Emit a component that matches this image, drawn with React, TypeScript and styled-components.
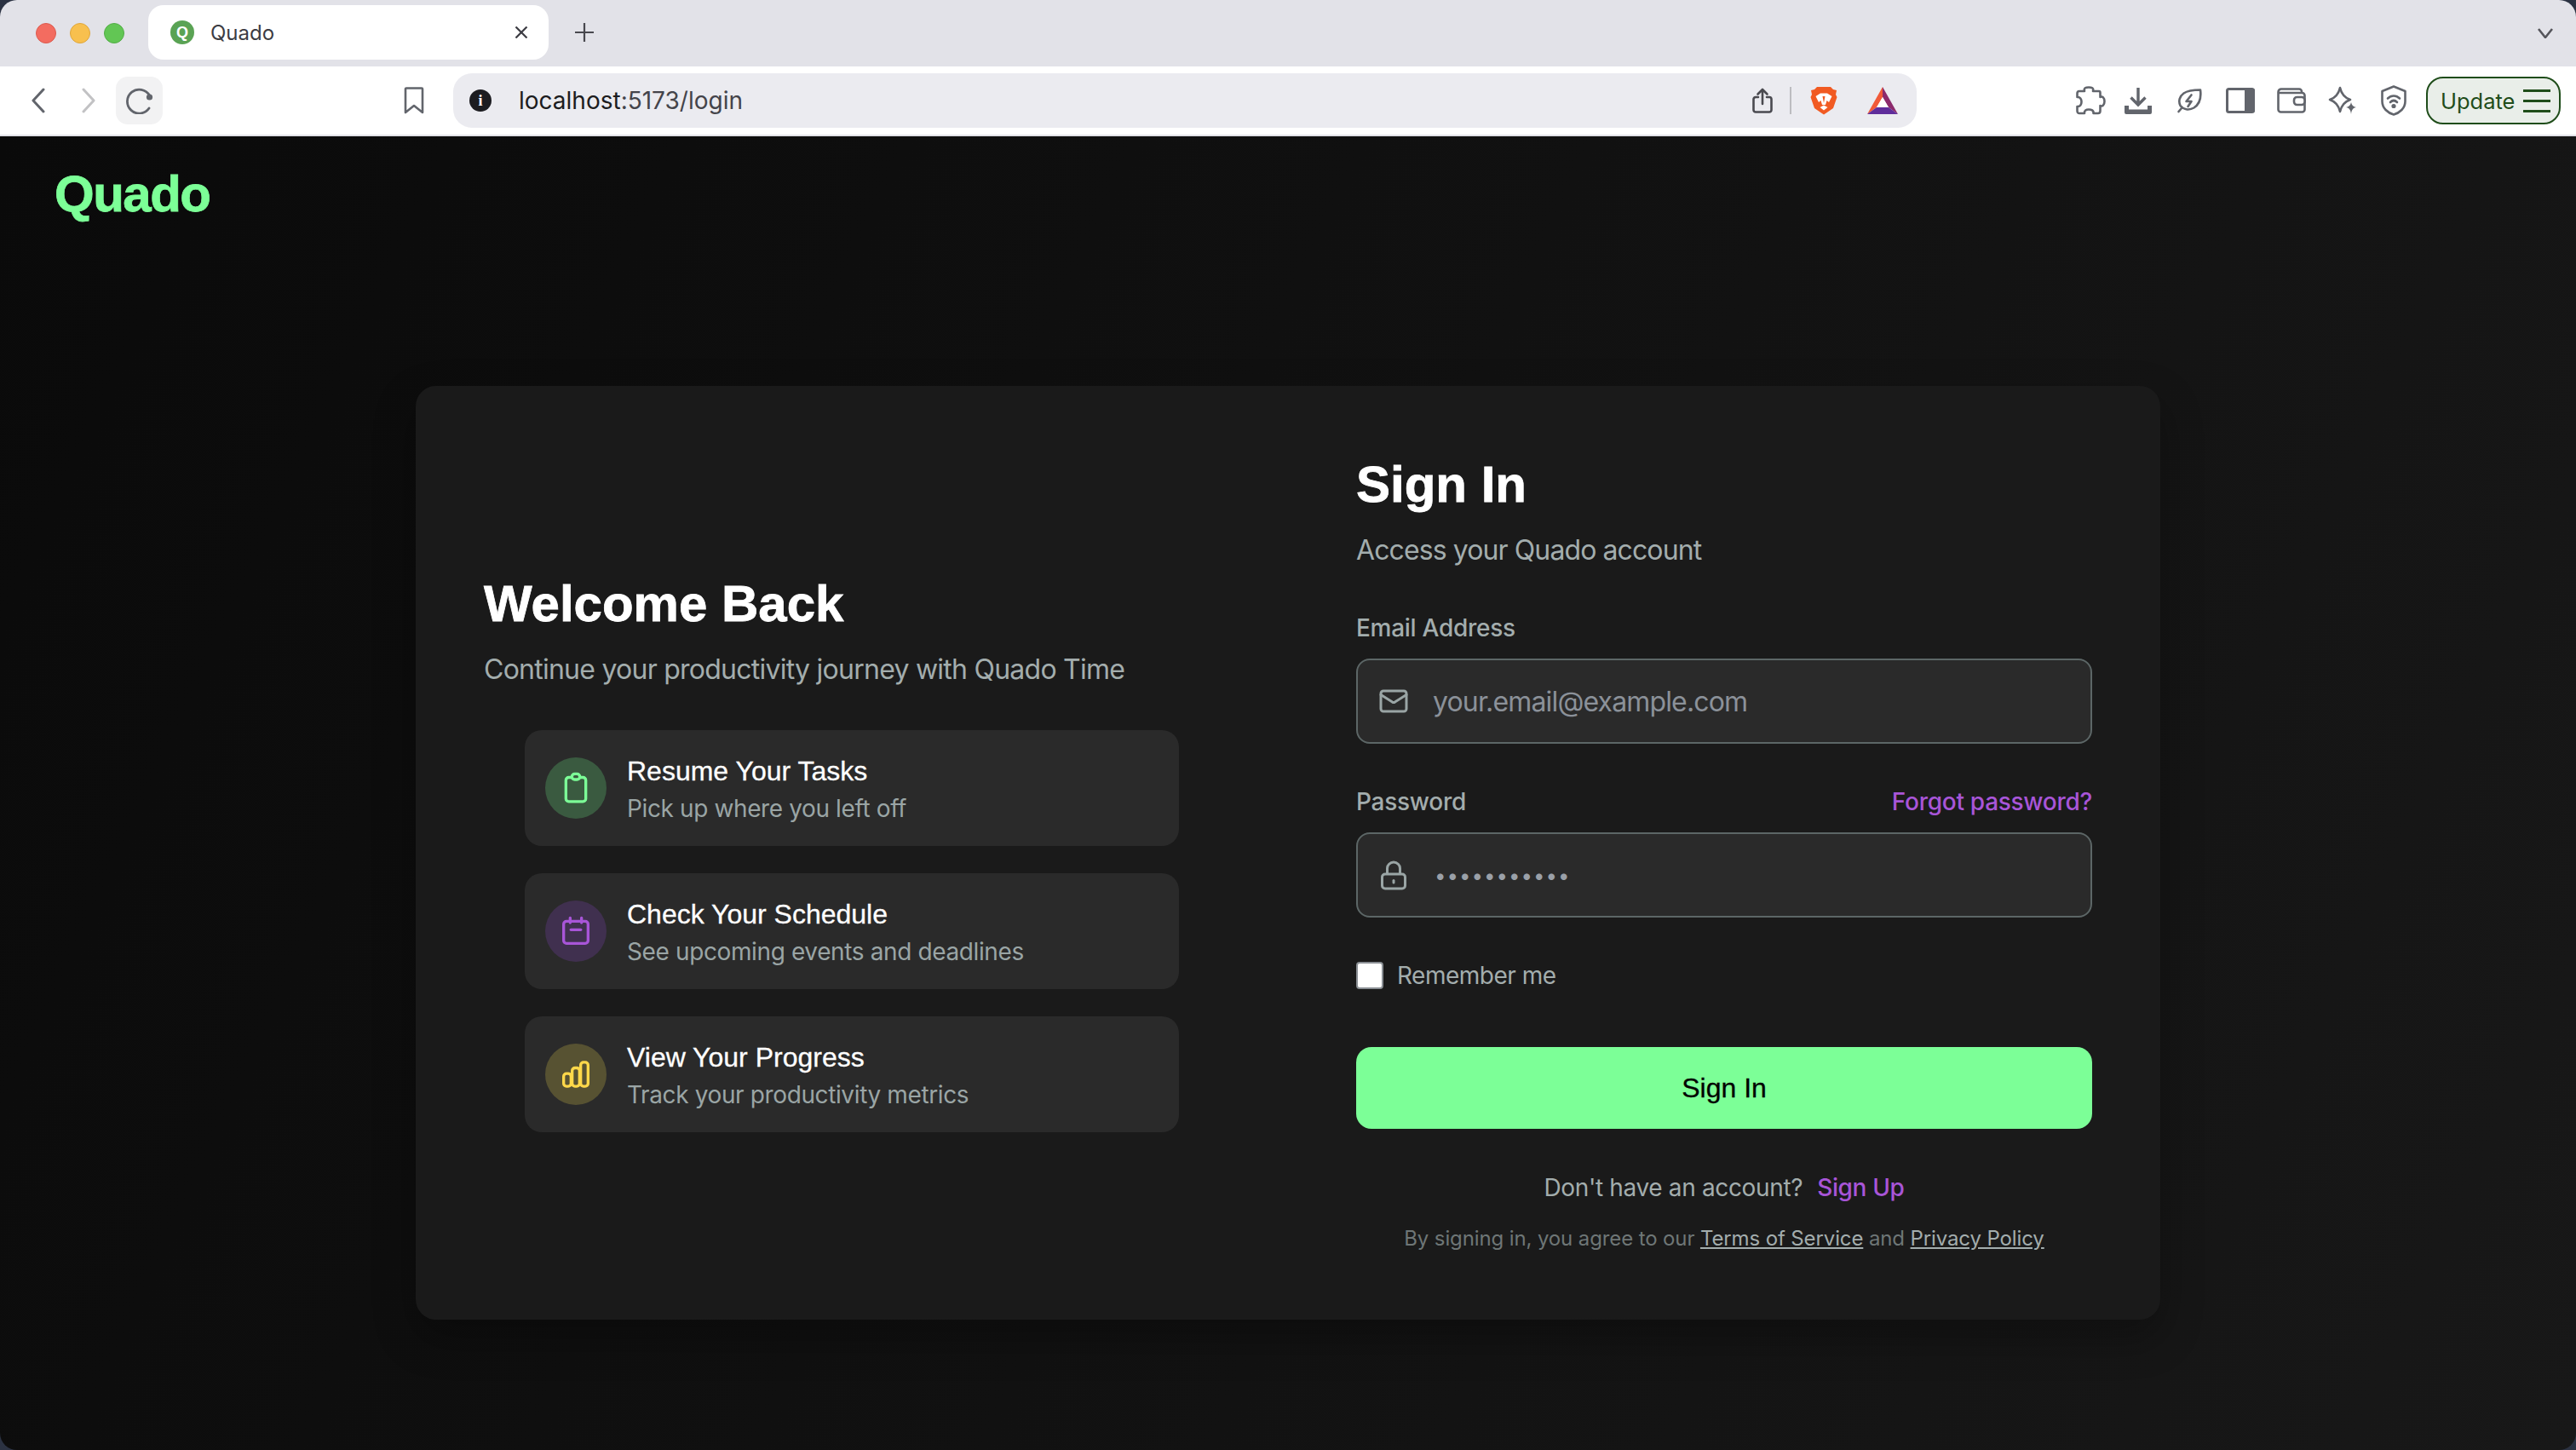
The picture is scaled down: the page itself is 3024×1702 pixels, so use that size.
import React from 'react';
import styled, { createGlobalStyle } from 'styled-components';
import { Mail } from 'lucide-react';

const GlobalStyle = createGlobalStyle`
  html, body {
    margin: 0;
    padding: 0;
    background: #2b3242;
  }
  * {
    box-sizing: border-box;
  }
`;

const Window = styled.div`
  width: 3024px;
  height: 1702px;
  display: flex;
  flex-direction: column;
  border-radius: 20px;
  overflow: hidden;
  font-family: Inter, "Noto Sans", sans-serif;
`;

/* browser chrome */
const TabStrip = styled.div`
  height: 78px;
  flex: none;
  display: flex;
  align-items: center;
  padding: 0 27px 0 42px;
  background: #e2e2e8;
`;

const Lights = styled.div`
  display: flex;
  gap: 16px;
`;

const Light = styled.span<{ $color: string; $edge: string }>`
  width: 24px;
  height: 24px;
  border-radius: 50%;
  background: ${(p) => p.$color};
  border: 1px solid ${(p) => p.$edge};
`;

const Tab = styled.div`
  width: 470px;
  height: 64px;
  margin-left: 28px;
  align-self: flex-end;
  margin-bottom: 8px;
  display: flex;
  align-items: center;
  padding: 0 24px 0 26px;
  border-radius: 18px;
  background: #ffffff;
  color: #3c3c43;
  font-size: 24px;
`;

const Favicon = styled.span`
  width: 28px;
  height: 28px;
  flex: none;
  display: flex;
  align-items: center;
  justify-content: center;
  border-radius: 50%;
  background: #5aa354;
  color: #ffffff;
  font: bold 18px "Liberation Sans", sans-serif;
`;

const TabTitle = styled.span`
  margin-left: 19px;
  flex: 1;
`;

const NewTab = styled.span`
  display: flex;
  margin-left: 31px;
  margin-bottom: 2px;
`;

const TabMenu = styled.span`
  display: flex;
  margin-left: auto;
`;

const Toolbar = styled.div`
  height: 82px;
  flex: none;
  display: grid;
  grid-template-columns: 532px 1718px 1fr;
  align-items: start;
  padding-top: 8px;
  background: #ffffff;
  border-bottom: 2px solid #e2e2e8;
`;

const NavGroup = styled.div`
  height: 64px;
  display: flex;
  align-items: center;
  padding: 0 34px 0 27px;
`;

const NavSlot = styled.span<{ $gap?: number }>`
  width: 36px;
  display: flex;
  justify-content: center;
  margin-left: ${(p) => p.$gap ?? 0}px;
`;

const ReloadButton = styled.span`
  width: 55px;
  height: 56px;
  margin-left: 14px;
  display: flex;
  align-items: center;
  justify-content: center;
  border-radius: 14px;
  background: #f2f2f3;
`;

const BookmarkSlot = styled.span`
  margin-left: auto;
  display: flex;
  width: 24px;
`;

const UrlBar = styled.div`
  height: 64px;
  display: flex;
  align-items: center;
  padding: 0 22px 0 19px;
  border-radius: 22px;
  background: #ebebf0;
`;

const InfoDot = styled.span`
  width: 26px;
  height: 26px;
  flex: none;
  display: flex;
  align-items: center;
  justify-content: center;
  border-radius: 50%;
  background: #1c1c20;
  color: #ffffff;
  font: bold 18px "Liberation Serif", serif;
`;

const UrlText = styled.span`
  margin-left: 32px;
  font-size: 28px;
  color: #1c1c20;
`;

const UrlMuted = styled.span`
  color: #44444a;
`;

const UrlActions = styled.div`
  margin-left: auto;
  display: flex;
  align-items: center;
`;

const UrlDivider = styled.span`
  width: 2px;
  height: 32px;
  margin: 0 22px 0 20px;
  background: #bcbcc0;
`;

const BatSlot = styled.span`
  display: flex;
  margin-left: 35px;
`;

const ToolGroup = styled.div`
  height: 64px;
  display: flex;
  align-items: center;
  justify-content: flex-end;
  padding-right: 18px;
`;

const ToolSlot = styled.span<{ $nudge?: number }>`
  width: 60px;
  display: flex;
  justify-content: center;
  padding-left: ${(p) => p.$nudge ?? 0}px;
  color: #62656c;
`;

const UpdateButton = styled.div`
  width: 158px;
  height: 56px;
  margin-left: 8px;
  display: flex;
  align-items: center;
  justify-content: space-between;
  padding: 0 10px 0 15px;
  border: 2px solid #1f4d1a;
  border-radius: 20px;
  background: #e9eee9;
  color: #1f4d1a;
  font-size: 25.5px;
`;

const BurgerLines = styled.span`
  width: 32px;
  display: flex;
  flex-direction: column;
  gap: 9px;
`;

const BurgerLine = styled.span`
  height: 3px;
  background: #1f4d1a;
`;

/* page */
const Page = styled.div`
  flex: 1;
  display: flex;
  flex-direction: column;
  background: linear-gradient(115deg, #0a0a0a 0%, #181818 100%);
`;

const Header = styled.header`
  height: 140px;
  flex: none;
  padding: 32px 0 0 64px;
`;

const Logo = styled.div`
  font: bold 60px/72px "Liberation Sans", Arial, sans-serif;
  letter-spacing: -1.5px;
  color: #7cff97;
  -webkit-text-stroke: 0.8px #7cff97;
`;

const Main = styled.main`
  flex: 1;
  display: flex;
  align-items: center;
  justify-content: center;
`;

const Card = styled.div`
  width: 2048px;
  height: 1096px;
  display: grid;
  grid-template-columns: 1fr 1fr;
  border-radius: 24px;
  background: #1a1a1a;
  box-shadow: 0 20px 50px rgba(0, 0, 0, 0.3);
`;

const WelcomePanel = styled.section`
  display: flex;
  flex-direction: column;
  justify-content: center;
  padding: 80px;
`;

const Heading = styled.h1`
  margin: 0;
  font: bold 60px/72px "Liberation Sans", Arial, sans-serif;
  color: #ffffff;
  -webkit-text-stroke: 0.8px #ffffff;
`;

const Lead = styled.p`
  margin: 17px 0 0;
  font-size: 32px;
  line-height: 48px;
  letter-spacing: -0.75px;
  color: #a3adad;
`;

const FeatureList = styled.div`
  margin-top: 47px;
  padding: 0 48px;
  display: flex;
  flex-direction: column;
  gap: 32px;
`;

const Feature = styled.div`
  height: 136px;
  display: flex;
  align-items: center;
  gap: 24px;
  padding: 0 24px;
  border-radius: 20px;
  background: #2a2a2a;
`;

const FeatureIcon = styled.span<{ $bg: string; $color: string }>`
  width: 72px;
  height: 72px;
  flex: none;
  display: flex;
  align-items: center;
  justify-content: center;
  border-radius: 50%;
  background: ${(p) => p.$bg};
  color: ${(p) => p.$color};
`;

const FeatureText = styled.div`
  margin-top: 3px;
  display: flex;
  flex-direction: column;
  gap: 4px;
`;

const FeatureTitle = styled.div`
  font: 32px/40px "Liberation Sans", Arial, sans-serif;
  color: #ffffff;
  -webkit-text-stroke: 0.3px #ffffff;
`;

const FeatureSub = styled.div`
  font-size: 28px;
  line-height: 40px;
  letter-spacing: -0.38px;
  color: #9aa5a5;
`;

const FormPanel = styled.section`
  display: flex;
  flex-direction: column;
  padding: 80px 80px 0;
`;

const FormSub = styled(Lead)`
  margin-bottom: 47px;
  letter-spacing: -0.9px;
`;

const LabelRow = styled.div`
  display: flex;
  justify-content: space-between;
  margin-bottom: 16px;
  font-size: 28px;
  line-height: 40px;
  font-weight: 500;
  letter-spacing: -0.28px;
`;

const FieldLabel = styled.label`
  color: #a3adad;
`;

const ForgotLink = styled.a`
  color: #a855d8;
`;

const InputBox = styled.div`
  height: 100px;
  margin-bottom: 48px;
  display: flex;
  align-items: center;
  gap: 28px;
  padding: 0 24px;
  border: 2px solid #5c6666;
  border-radius: 16px;
  background: #2a2a2a;
  color: #9aa5a5;
`;

const TextInput = styled.input`
  flex: 1;
  min-width: 0;
  padding: 0;
  border: none;
  outline: none;
  background: transparent;
  font: 32px Inter, sans-serif;
  letter-spacing: -0.85px;
  color: #9aa5a5;

  &::placeholder {
    color: #8b9199;
    opacity: 1;
  }
`;

const PasswordInput = styled(TextInput)`
  margin-left: 2px;
  font-size: 24px;
  letter-spacing: 1px;
  color: #9aa0a8;
`;

const RememberRow = styled.label`
  height: 40px;
  display: flex;
  align-items: center;
  gap: 16px;
  font-size: 28px;
  letter-spacing: -0.5px;
  color: #a3adad;
`;

const CheckBox = styled.span`
  width: 32px;
  height: 32px;
  border: 2px solid #8a8f94;
  border-radius: 4px;
  background: #ffffff;
`;

const SubmitButton = styled.button`
  height: 96px;
  margin-top: 64px;
  border: none;
  border-radius: 18px;
  background: #7cff97;
  color: #000000;
  font: 32px "Liberation Sans", Arial, sans-serif;
  -webkit-text-stroke: 0.3px #000000;
`;

const SignUpLine = styled.div`
  margin-top: 49px;
  text-align: center;
  font-size: 28px;
  line-height: 40px;
  letter-spacing: -0.35px;
  color: #a3adad;
`;

const SignUpLink = styled.a`
  margin-left: 17px;
  font-weight: 500;
  color: #a855d8;
`;

const Terms = styled.div`
  margin-top: 24px;
  text-align: center;
  font-size: 24px;
  line-height: 32px;
  letter-spacing: -0.12px;
  color: #6e7676;
`;

const TermsLink = styled.a`
  color: #a3adad;
  text-decoration: underline;
`;

/* drawn icons */
const ClipboardIcon = () => (
  <svg width="40" height="40" viewBox="0 0 24 24" fill="none" stroke="currentColor" strokeWidth="2">
    <rect x="5" y="4.5" width="14" height="17" rx="2" />
    <rect x="9.2" y="2" width="5.6" height="4" rx="2" fill="#3a5a40" />
  </svg>
);

const CalendarIcon = () => (
  <svg width="40" height="40" viewBox="0 0 24 24" fill="none" stroke="currentColor" strokeWidth="2" strokeLinecap="round">
    <rect x="3.4" y="5" width="17.2" height="15.6" rx="2" />
    <path d="M8 2.6V6M16 2.6V6M8.5 11h7" />
  </svg>
);

const BarsIcon = () => (
  <svg width="40" height="40" viewBox="0 0 24 24" fill="none" stroke="currentColor" strokeWidth="2" strokeLinejoin="round">
    <rect x="3.4" y="11.5" width="5.2" height="9" rx="2" />
    <rect x="9.4" y="7.5" width="5.2" height="13" rx="2" />
    <rect x="15.4" y="3.5" width="5.2" height="17" rx="2" />
  </svg>
);

const LockIcon = () => (
  <svg width="36" height="36" viewBox="0 0 36 36" fill="none" stroke="currentColor" strokeWidth="3">
    <rect x="4.5" y="17" width="27" height="17" rx="3.5" />
    <path d="M10.5 17v-6.5a7.5 7.5 0 0 1 15 0V17" />
    <path d="M18 24.5v2.5" strokeLinecap="round" />
  </svg>
);

const CloseIcon = () => (
  <svg width="16" height="14" viewBox="0 0 16 14" fill="none" stroke="#3c3c43" strokeWidth="2.2">
    <path d="M1.5 .5l13 13M14.5 .5l-13 13" />
  </svg>
);

const PlusIcon = () => (
  <svg width="22" height="22" viewBox="0 0 22 22" fill="none" stroke="#48484e" strokeWidth="2.2">
    <path d="M11 0v22M0 11h22" />
  </svg>
);

const ChevronDown = () => (
  <svg width="18" height="12" viewBox="0 0 18 12" fill="none" stroke="#55555b" strokeWidth="2.6">
    <path d="M1 1l8 10 8-10" />
  </svg>
);

const ChevronSide = ({ color, flip }: { color: string; flip?: boolean }) => (
  <svg width="16" height="30" viewBox="0 0 16 30" fill="none" stroke={color} strokeWidth="3" strokeLinecap="round" strokeLinejoin="round">
    <path d={flip ? 'M2 2l12 13L2 28' : 'M14 2L2 15l12 13'} />
  </svg>
);

const ReloadIcon = () => (
  <svg width="32" height="32" viewBox="0 0 32 32" fill="none" stroke="#62656c" strokeWidth="2.8">
    <path d="M27.5 10A14 14 0 1 0 27 25" strokeLinecap="round" />
    <circle cx="27.5" cy="12" r="3.6" fill="#62656c" stroke="none" />
  </svg>
);

const BookmarkIcon = () => (
  <svg width="24" height="32" viewBox="0 0 24 32" fill="none" stroke="#62656c" strokeWidth="2.6" strokeLinejoin="round">
    <path d="M2 2.500a1 1 0 0 1 1-1h18a1 1 0 0 1 1 1V30l-10-8-10 8z" />
  </svg>
);

const ShareIcon = () => (
  <svg width="24" height="30" viewBox="0 0 24 30" fill="none" stroke="#4a4a50" strokeWidth="2.6" strokeLinecap="round" strokeLinejoin="round">
    <path d="M7 11H4a2.500 2.500 0 0 0-2.500 2.500V26A2.500 2.500 0 0 0 4 28.500h16a2.500 2.500 0 0 0 2.500-2.500V13.500A2.500 2.500 0 0 0 20 11h-3" />
    <path d="M12 19V2M6.500 7.500L12 2l5.500 5.500" />
  </svg>
);

const BraveIcon = () => (
  <svg width="32" height="34" viewBox="0 0 32 34">
    <path fill="#f15a22" d="M8 1h16l3 3 4 1-1 5 1.500 3L27 26l-8 5.500-3 2-3-2L5 26 .5 13 2 10 1 5l4-1z" />
    <path fill="#ffffff" d="M6.500 12L12 8.500h8l5.500 3.500-3.500 7-2.500-2-1.500 5h-4l-1.500-5L10 19z" />
    <path fill="#ffffff" d="M11.500 25l4.500-2.500 4.500 2.500-4.500 3.500z" />
    <path fill="#f15a22" d="M14.500 12h3L16 20z" />
  </svg>
);

const BatIcon = () => (
  <svg width="36" height="32" viewBox="0 0 36 32">
    <path fill="#f15a38" d="M18 0v12l-7 12-11 8z" />
    <path fill="#8c2a6c" d="M18 0l18 32-11-8-7-12z" />
    <path fill="#5f2d9b" d="M0 32l11-8h14l11 8z" />
    <path fill="#ffffff" d="M18 12l7 12H11z" />
  </svg>
);

const PuzzleIcon = () => (
  <svg width="35" height="34" viewBox="0 0 35 34" fill="none" stroke="currentColor" strokeWidth="2.6" strokeLinejoin="round">
    <path d="M10 6C9 2 11.500 1.500 15 1.500S21 2 20 6h7q1.500 0 1.500 2v5c2.500-1.500 5 1 5 5s-2.500 6.500-5 5v6q0 3-2.500 3h-5.500c.5-3.500-2.500-4.500-5.500-4.500S9.500 28.500 10 32H4q-2.500 0-2.500-3v-5c3.500.5 5-2.500 5-5.500s-1.500-6-5-5.500V8.500Q1.500 6 4 6z" />
  </svg>
);

const DownloadIcon = () => (
  <svg width="32" height="32" viewBox="0 0 32 32" fill="none" stroke="currentColor">
    <path d="M16 1v19M7.500 12.500L16 21l8.500-8.500" strokeWidth="3.400" />
    <path d="M0 22h5v4.500h22V22h5v8a2 2 0 0 1-2 2H2a2 2 0 0 1-2-2z" fill="currentColor" stroke="none" />
  </svg>
);

const LeafIcon = () => (
  <svg width="30" height="30" viewBox="0 0 30 30" fill="none" stroke="currentColor" strokeWidth="2.600" strokeLinecap="round" strokeLinejoin="round">
    <path d="M28 2.500c1 7.500-.5 16.500-7.500 21-6 3.500-12.500 2-16-2.500-2.500-5-1-11 4-14.500C13.500 3 21.500 2.500 28 2.500z" />
    <path d="M6 24l-3.500 4" />
    <path d="M17.500 8.500l-6 7.500h6l-4 6" />
  </svg>
);

const SidebarIcon = () => (
  <svg width="34" height="30" viewBox="0 0 34 30">
    <rect x="1.500" y="1.500" width="31" height="27" rx="2" fill="none" stroke="currentColor" strokeWidth="3" />
    <path fill="currentColor" d="M22 1h10a2 2 0 0 1 2 2v24a2 2 0 0 1-2 2H22z" />
  </svg>
);

const WalletIcon = () => (
  <svg width="34" height="30" viewBox="0 0 34 30" fill="none" stroke="currentColor" strokeWidth="2.600">
    <path d="M29 6V4.500A3 3 0 0 0 26 1.500H5A3.500 3.500 0 0 0 1.500 5v20.500A3 3 0 0 0 4.500 28.500h25a3 3 0 0 0 3-3V9a3 3 0 0 0-3-3H2" />
    <rect x="20" y="11" width="12.500" height="9" rx="3.500" fill="#ffffff" />
  </svg>
);

const SparkleIcon = () => (
  <svg width="34" height="34" viewBox="0 0 34 34" fill="none" stroke="currentColor" strokeWidth="2.600" strokeLinejoin="round">
    <path d="M14 2c1.500 6.500 6 12 12 14-6 2-10.500 7.500-12 14-1.500-6.500-6-12-12-14 6-2 10.500-7.500 12-14z" />
    <path fill="currentColor" stroke="none" d="M27 19c.6 3.500 2.500 5.400 6 6-3.500.6-5.400 2.500-6 8-.6-5.500-2.500-7.400-6-8 3.500-.6 5.400-2.500 6-6z" />
  </svg>
);

const ShieldIcon = () => (
  <svg width="30" height="36" viewBox="0 0 30 36" fill="none" stroke="currentColor" strokeWidth="2.600" strokeLinecap="round" strokeLinejoin="round">
    <path d="M15 1.500L28.500 7v12c0 8-6.500 13.500-13.500 15.500C8 32.500 1.500 27 1.500 19V7z" />
    <path d="M8 15.500c4-4 10-4 14 0M11 20c2.500-2.500 5.500-2.500 8 0" />
    <circle cx="15" cy="24.500" r="1.300" fill="currentColor" />
  </svg>
);

const features = [
  { title: 'Resume Your Tasks', sub: 'Pick up where you left off', bg: '#3a5a40', color: '#7cff97', icon: <ClipboardIcon /> },
  { title: 'Check Your Schedule', sub: 'See upcoming events and deadlines', bg: '#40304f', color: '#a855d8', icon: <CalendarIcon /> },
  { title: 'View Your Progress', sub: 'Track your productivity metrics', bg: '#575232', color: '#ffd84a', icon: <BarsIcon /> },
];

export default function App() {
  return (
    <Window>
      <GlobalStyle />
      <TabStrip>
        <Lights>
          <Light $color="#f36c60" $edge="#dc5a4e" />
          <Light $color="#f8c04e" $edge="#dfa63a" />
          <Light $color="#62c654" $edge="#52ad46" />
        </Lights>
        <Tab>
          <Favicon>Q</Favicon>
          <TabTitle>Quado</TabTitle>
          <CloseIcon />
        </Tab>
        <NewTab>
          <PlusIcon />
        </NewTab>
        <TabMenu>
          <ChevronDown />
        </TabMenu>
      </TabStrip>

      <Toolbar>
        <NavGroup>
          <NavSlot>
            <ChevronSide color="#62656c" />
          </NavSlot>
          <NavSlot $gap={23}>
            <ChevronSide color="#c2c2c4" flip />
          </NavSlot>
          <ReloadButton>
            <ReloadIcon />
          </ReloadButton>
          <BookmarkSlot>
            <BookmarkIcon />
          </BookmarkSlot>
        </NavGroup>
        <UrlBar>
          <InfoDot>i</InfoDot>
          <UrlText>
            localhost<UrlMuted>:5173/login</UrlMuted>
          </UrlText>
          <UrlActions>
            <ShareIcon />
            <UrlDivider />
            <BraveIcon />
            <BatSlot>
              <BatIcon />
            </BatSlot>
          </UrlActions>
        </UrlBar>
        <ToolGroup>
          <ToolSlot $nudge={8}>
            <PuzzleIcon />
          </ToolSlot>
          <ToolSlot>
            <DownloadIcon />
          </ToolSlot>
          <ToolSlot>
            <LeafIcon />
          </ToolSlot>
          <ToolSlot>
            <SidebarIcon />
          </ToolSlot>
          <ToolSlot>
            <WalletIcon />
          </ToolSlot>
          <ToolSlot>
            <SparkleIcon />
          </ToolSlot>
          <ToolSlot>
            <ShieldIcon />
          </ToolSlot>
          <UpdateButton>
            Update
            <BurgerLines>
              <BurgerLine />
              <BurgerLine />
              <BurgerLine />
            </BurgerLines>
          </UpdateButton>
        </ToolGroup>
      </Toolbar>

      <Page>
        <Header>
          <Logo>Quado</Logo>
        </Header>
        <Main>
          <Card>
            <WelcomePanel>
              <Heading>Welcome Back</Heading>
              <Lead>Continue your productivity journey with Quado Time</Lead>
              <FeatureList>
                {features.map((f) => (
                  <Feature key={f.title}>
                    <FeatureIcon $bg={f.bg} $color={f.color}>
                      {f.icon}
                    </FeatureIcon>
                    <FeatureText>
                      <FeatureTitle>{f.title}</FeatureTitle>
                      <FeatureSub>{f.sub}</FeatureSub>
                    </FeatureText>
                  </Feature>
                ))}
              </FeatureList>
            </WelcomePanel>

            <FormPanel>
              <Heading>Sign In</Heading>
              <FormSub>Access your Quado account</FormSub>

              <LabelRow>
                <FieldLabel>Email Address</FieldLabel>
              </LabelRow>
              <InputBox>
                <Mail size={36} strokeWidth={2} />
                <TextInput placeholder="your.email@example.com" readOnly />
              </InputBox>

              <LabelRow>
                <FieldLabel>Password</FieldLabel>
                <ForgotLink>Forgot password?</ForgotLink>
              </LabelRow>
              <InputBox>
                <LockIcon />
                <PasswordInput type="password" defaultValue="12345678901" readOnly />
              </InputBox>

              <RememberRow>
                <CheckBox />
                Remember me
              </RememberRow>

              <SubmitButton>Sign In</SubmitButton>

              <SignUpLine>
                Don't have an account?
                <SignUpLink>Sign Up</SignUpLink>
              </SignUpLine>
              <Terms>
                By signing in, you agree to our <TermsLink>Terms of Service</TermsLink> and{' '}
                <TermsLink>Privacy Policy</TermsLink>
              </Terms>
            </FormPanel>
          </Card>
        </Main>
      </Page>
    </Window>
  );
}
